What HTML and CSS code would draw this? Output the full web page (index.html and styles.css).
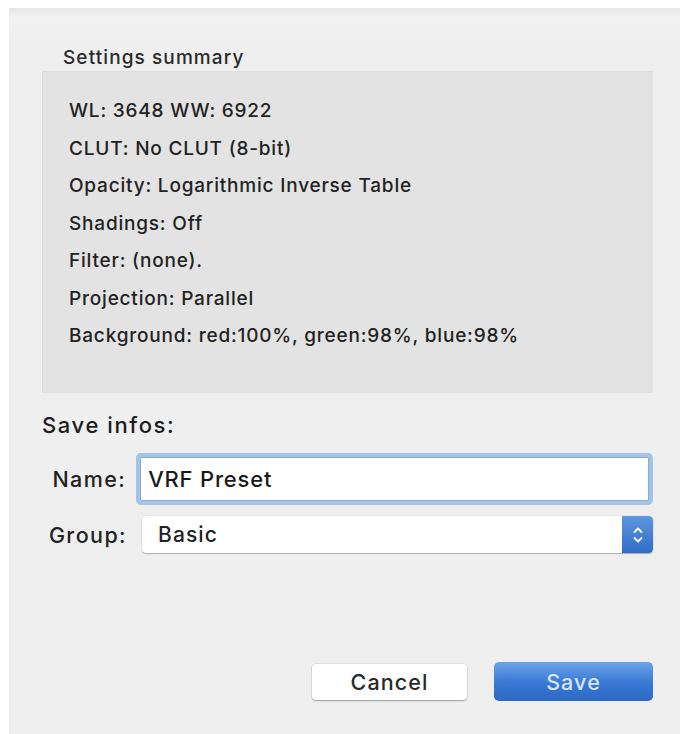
FILE: index.html
```html
<!DOCTYPE html>
<html>
<head>
<meta charset="utf-8">
<link rel="stylesheet" href="styles.css">
</head>
<body>
<div class="sheet">
  <div class="summary-title">Settings summary</div>
  <div class="summary">
    <div class="line">WL: 3648 WW: 6922</div>
    <div class="line">CLUT: No CLUT (8-bit)</div>
    <div class="line">Opacity: Logarithmic Inverse Table</div>
    <div class="line">Shadings: Off</div>
    <div class="line">Filter: (none).</div>
    <div class="line">Projection: Parallel</div>
    <div class="line">Background: red:100%, green:98%, blue:98%</div>
  </div>
  <div class="save-title">Save infos:</div>
  <div class="form">
    <div class="row name-row">
      <label class="lbl">Name:</label>
      <div class="input">VRF Preset</div>
    </div>
    <div class="row group-row">
      <label class="lbl">Group:</label>
      <div class="select">
        <span class="select-text">Basic</span>
        <span class="stepper">
          <svg width="12" height="22" viewBox="0 0 12 22">
            <path d="M2.5 8 L6 4.5 L9.5 8" fill="none" stroke="#fff" stroke-width="1.8" stroke-linecap="round" stroke-linejoin="round"/>
            <path d="M2.5 14 L6 17.5 L9.5 14" fill="none" stroke="#fff" stroke-width="1.8" stroke-linecap="round" stroke-linejoin="round"/>
          </svg>
        </span>
      </div>
    </div>
  </div>
  <div class="buttons">
    <div class="btn cancel">Cancel</div>
    <div class="btn save">Save</div>
  </div>
</div>
</body>
</html>
```
FILE: styles.css
```css
html, body {
  margin: 0;
  padding: 0;
  background: #ffffff;
  overflow: hidden;
}
body {
  padding: 8px 0 0 9px;
  font-family: Inter, "Liberation Sans", Arial, sans-serif;
  font-weight: 450;
  color: #222;
}
.sheet {
  height: 726px;
  background: linear-gradient(#e6e6e6 0px, #f1f1f1 10px, #efefef 40px);
  box-sizing: border-box;
  padding: 39px 27px 0 33px;
  display: flex;
  flex-direction: column;
}
.summary-title {
  font-size: 19px;
  letter-spacing: 1.1px;
  margin-left: 21px;
  line-height: 22px;
  color: #2a2a2a;
}
.summary {
  margin-top: 2px;
  height: 322px;
  background: #e3e3e3;
  border-top: 1px solid #dcdcdc;
  border-left: 1px solid #dadada;
  box-sizing: border-box;
  padding: 20px 0 0 26px;
  display: flex;
  flex-direction: column;
}
.line {
  font-size: 19px;
  letter-spacing: 0.8px;
  line-height: 37.5px;
  height: 37.5px;
  color: #222;
}
.save-title {
  font-size: 22px;
  letter-spacing: 1.6px;
  margin-top: 20px;
  line-height: 24px;
  color: #1c1c1c;
}
.form {
  display: flex;
  flex-direction: column;
  margin-top: 16px;
}
.row {
  display: flex;
  align-items: center;
}
.lbl {
  width: 85px;
  text-align: right;
  font-size: 21.5px;
  letter-spacing: 1.4px;
  color: #222;
}
.input {
  margin-left: 10px;
  width: 522px;
  height: 52px;
  box-sizing: border-box;
  border: 4px solid #a3c4e6;
  border-radius: 5px;
  background: #fff;
  padding: 0 0 0 8px;
  font-size: 22px;
  letter-spacing: 0.8px;
  line-height: 44px;
  color: #1a1a1a;
  box-shadow: inset 0 0 0 1px #86add7;
}
.group-row {
  margin-top: 11px;
}
.select {
  margin-left: 15px;
  width: 511px;
  height: 37px;
  box-sizing: border-box;
  background: #fff;
  border-radius: 4px;
  box-shadow: 0 1px 1px rgba(0,0,0,0.25), 0 0 0 0.5px rgba(0,0,0,0.08);
  display: flex;
  align-items: center;
  justify-content: space-between;
  overflow: hidden;
}
.select-text {
  font-size: 21px;
  letter-spacing: 1.1px;
  padding-left: 16px;
  color: #222;
}
.stepper {
  width: 31px;
  height: 37px;
  background: linear-gradient(#5e97df, #2f6cc8);
  display: flex;
  align-items: center;
  justify-content: center;
  border-radius: 0 4px 4px 0;
}
.buttons {
  margin-top: auto;
  margin-bottom: 33px;
  display: flex;
  justify-content: flex-end;
  gap: 27px;
  align-items: center;
}
.btn {
  height: 36px;
  box-sizing: border-box;
  border-radius: 4px;
  font-size: 21.5px;
  letter-spacing: 1.1px;
  display: flex;
  align-items: center;
  justify-content: center;
}
.cancel {
  width: 155px;
  background: #fff;
  color: #2a2a2a;
  box-shadow: 0 1px 1.5px rgba(0,0,0,0.3), 0 0 0 0.5px rgba(0,0,0,0.1);
}
.save {
  width: 159px;
  height: 39px;
  background: linear-gradient(#6aa4e8, #3877d4 55%, #2e69c4);
  color: #d6e5f7;
  border-radius: 5px;
}
```
